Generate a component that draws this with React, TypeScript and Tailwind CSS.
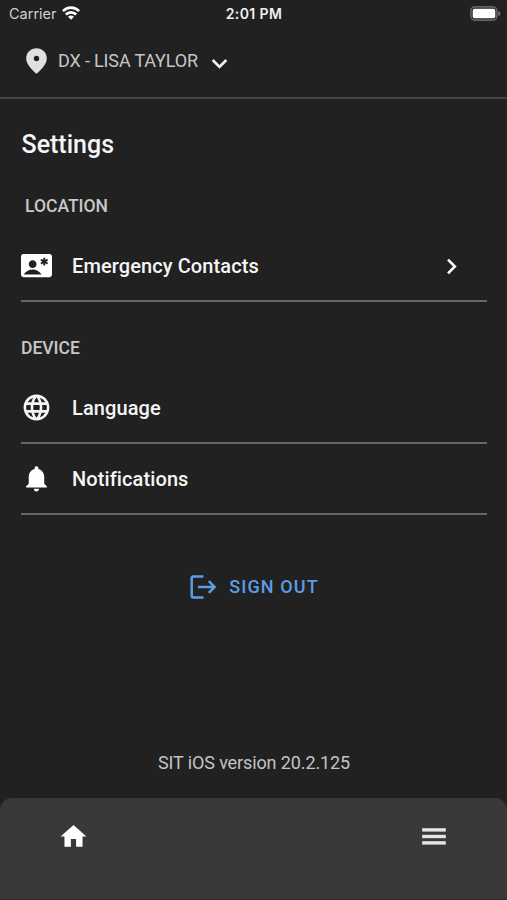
import React from 'react';
import {
  MdChevronRight,
  MdContactEmergency,
  MdHome,
  MdKeyboardArrowDown,
  MdLanguage,
  MdNotifications,
} from 'react-icons/md';

interface SettingsRowProps {
  icon: React.ReactNode;
  label: string;
  hasChevron?: boolean;
}

const WifiIcon: React.FC<{ className?: string }> = ({ className }) => (
  <svg viewBox="0 0 18 14" fill="none" stroke="currentColor" strokeWidth="2.6" className={className}>
    <path d="M0.9 5.1C5.4 0.5 12.6 0.5 17.1 5.1" />
    <path d="M3.8 8.5C6.8 5.6 11.2 5.6 14.2 8.5" />
    <path d="M9 13.8L6 10.8C7.7 9.2 10.3 9.2 12 10.8Z" fill="currentColor" stroke="none" />
  </svg>
);

const BatteryIcon: React.FC<{ className?: string }> = ({ className }) => (
  <svg viewBox="0 0 31 15" fill="none" className={className}>
    <rect x="0.9" y="0.9" width="26" height="13.2" rx="4" stroke="#636363" strokeWidth="1.6" />
    <rect x="2.7" y="2.7" width="22.6" height="9.6" rx="2" fill="#ffffff" />
    <path d="M28.4 5C31 6 31 9 28.4 10Z" fill="#7a7a7a" />
  </svg>
);

const PinIcon: React.FC<{ className?: string }> = ({ className }) => (
  <svg viewBox="0 0 21 26" fill="currentColor" className={className}>
    <path
      fillRule="evenodd"
      d="M10.5 0.2C4.7 0.2 0.2 4.6 0.2 10.2C0.2 16 5.4 21.4 10.5 25.8C15.6 21.4 20.8 16 20.8 10.2C20.8 4.6 16.3 0.2 10.5 0.2ZM10.5 7.8A2.7 2.7 0 1 1 10.5 13.2A2.7 2.7 0 1 1 10.5 7.8Z"
    />
  </svg>
);

const SignOutIcon: React.FC<{ className?: string }> = ({ className }) => (
  <svg viewBox="0 0 27 24" fill="none" stroke="currentColor" strokeWidth="2.5" className={className}>
    <path d="M13.5 1.6H3.4Q1.7 1.6 1.7 3.3V20.7Q1.7 22.4 3.4 22.4H13.5" />
    <path d="M8 12H24.5" />
    <path d="M18.8 6.2L24.6 12L18.8 17.8" />
  </svg>
);

const MenuIcon: React.FC<{ className?: string }> = ({ className }) => (
  <svg viewBox="0 0 24 17" fill="currentColor" className={className}>
    <rect x="0.2" y="0.2" width="23.6" height="3.4" />
    <rect x="0.2" y="6.8" width="23.6" height="3.4" />
    <rect x="0.2" y="13.2" width="23.6" height="3.4" />
  </svg>
);

const SettingsRow: React.FC<SettingsRowProps> = ({ icon, label, hasChevron }) => (
  <li className="flex h-[71px] items-center border-b-2 border-[#676767]">
    <span className="flex w-[51px] shrink-0">{icon}</span>
    <span className="flex-1 text-[20px] font-medium tracking-[0.1px] text-[#f5f5f5]">{label}</span>
    {hasChevron && <MdChevronRight className="mt-[2px] mr-[20px] size-[31px] text-white" />}
  </li>
);

export default function App() {
  return (
    <div className="flex h-[900px] w-[507px] flex-col overflow-hidden bg-[#212121] font-['Roboto',sans-serif] whitespace-nowrap">
      <div className="grid h-[28px] grid-cols-3 items-center pr-[6px] pl-[9px] font-['Inter',sans-serif]">
        <div className="flex items-center gap-[5px]">
          <span className="text-[14.5px] leading-none text-[#cfcfcf]">Carrier</span>
          <WifiIcon className="mb-[2px] h-[14px] w-[18px] text-white" />
        </div>
        <span className="pr-[2px] text-center text-[14px] leading-none font-semibold tracking-[0.4px] text-[#f0f0f0]">
          2:01 PM
        </span>
        <BatteryIcon className="mb-[1px] h-[15px] w-[31px] justify-self-end" />
      </div>

      <header className="flex h-[71px] items-center border-b-2 border-[#444444] pb-[3px] pl-[26px]">
        <PinIcon className="h-[26px] w-[21px] text-[#e0e0e0]" />
        <span className="mb-[2px] ml-[11px] text-[18px] tracking-[-0.15px] text-[#c6c6c6]">DX - LISA TAYLOR</span>
        <MdKeyboardArrowDown className="mt-[5px] ml-[6px] size-[31px] text-[#f0f0f0]" />
      </header>

      <main className="flex flex-1 flex-col pr-[20px] pl-[21px]">
        <h1 className="mt-[28px] ml-[0.5px] text-[25px] leading-[36px] font-medium text-[#f5f5f5]">Settings</h1>

        <h2 className="mt-[31px] ml-[4px] text-[17.5px] leading-[24px] font-medium text-[#c8c8c8]">LOCATION</h2>
        <ul className="mt-[13px]">
          <SettingsRow
            icon={<MdContactEmergency className="size-[31px] text-white" />}
            label="Emergency Contacts"
            hasChevron
          />
        </ul>

        <h2 className="mt-[34px] text-[17.5px] leading-[24px] font-medium text-[#c8c8c8]">DEVICE</h2>
        <ul className="mt-[13px]">
          <SettingsRow icon={<MdLanguage className="size-[31px] text-[#f5f5f5]" />} label="Language" />
          <SettingsRow icon={<MdNotifications className="size-[31px] text-white" />} label="Notifications" />
        </ul>

        <button className="mt-[60px] ml-[1px] flex h-[24px] items-center justify-center gap-[12px] text-[#5a9fe3]">
          <SignOutIcon className="h-[24px] w-[27px]" />
          <span className="text-[18px] leading-none font-medium tracking-[1.1px]">SIGN OUT</span>
        </button>

        <p className="mt-auto mb-[23px] text-center text-[18px] leading-[24px] tracking-[-0.12px] text-[#c4c4c4]">
          SIT iOS version 20.2.125
        </p>
      </main>

      <nav className="flex h-[102px] items-start justify-between rounded-t-[12px] border-b border-[#30292d] bg-[#393939] pt-[23px] pr-[61px] pl-[58px] text-white">
        <MdHome className="size-[31px]" />
        <MenuIcon className="mt-[7px] h-[17px] w-[24px] text-[#e6e6e6]" />
      </nav>
    </div>
  );
}
